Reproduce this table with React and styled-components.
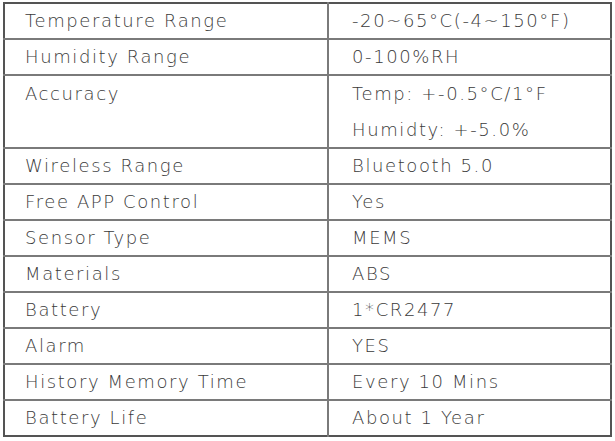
import React from 'react';
import styled, { createGlobalStyle } from 'styled-components';

const Global = createGlobalStyle`
  body {
    margin: 0;
    background: #ffffff;
  }
`;

const Page = styled.div`
  padding: 2px 0 0 3px;
`;

const SpecTable = styled.table`
  width: 609px;
  border-collapse: collapse;
  border: 2px solid #545454;
  font-family: "DejaVu Sans", "Liberation Sans", sans-serif;
  font-weight: 200;
  font-size: 18px;
  letter-spacing: 1.6px;
  color: #3a3a3a;
`;

const Row = styled.tr`
  border-bottom: 2px solid #7a7a7a;

  &:last-child {
    border-bottom: none;
  }
`;

const Cell = styled.td`
  box-sizing: border-box;
  padding: 0 0 0 ${(p) => (p.$value ? 23 : 20)}px;
  vertical-align: top;
  white-space: nowrap;
  width: ${(p) => (p.$value ? 'auto' : '324px')};
  border-right: ${(p) => (p.$value ? 'none' : '2px solid #7a7a7a')};
`;

const Line = styled.div`
  height: ${(p) => (p.$multi ? 35.5 : 34)}px;
  line-height: ${(p) => (p.$multi ? 35 : 34)}px;
`;

const specs = [
  ['Temperature Range', ['-20~65°C(-4~150°F)']],
  ['Humidity Range', ['0-100%RH']],
  ['Accuracy', ['Temp: +-0.5°C/1°F', 'Humidty: +-5.0%']],
  ['Wireless Range', ['Bluetooth 5.0']],
  ['Free APP Control', ['Yes']],
  ['Sensor Type', ['MEMS']],
  ['Materials', ['ABS']],
  ['Battery', ['1*CR2477']],
  ['Alarm', ['YES']],
  ['History Memory Time', ['Every 10 Mins']],
  ['Battery Life', ['About 1 Year']],
];

export default function App() {
  return (
    <Page>
      <Global />
      <SpecTable>
        <tbody>
          {specs.map(([label, values]) => {
            const multi = values.length > 1;
            return (
              <Row key={label}>
                <Cell>
                  <Line $multi={multi}>{label}</Line>
                </Cell>
                <Cell $value>
                  {values.map((v) => (
                    <Line key={v} $multi={multi}>
                      {v}
                    </Line>
                  ))}
                </Cell>
              </Row>
            );
          })}
        </tbody>
      </SpecTable>
    </Page>
  );
}
